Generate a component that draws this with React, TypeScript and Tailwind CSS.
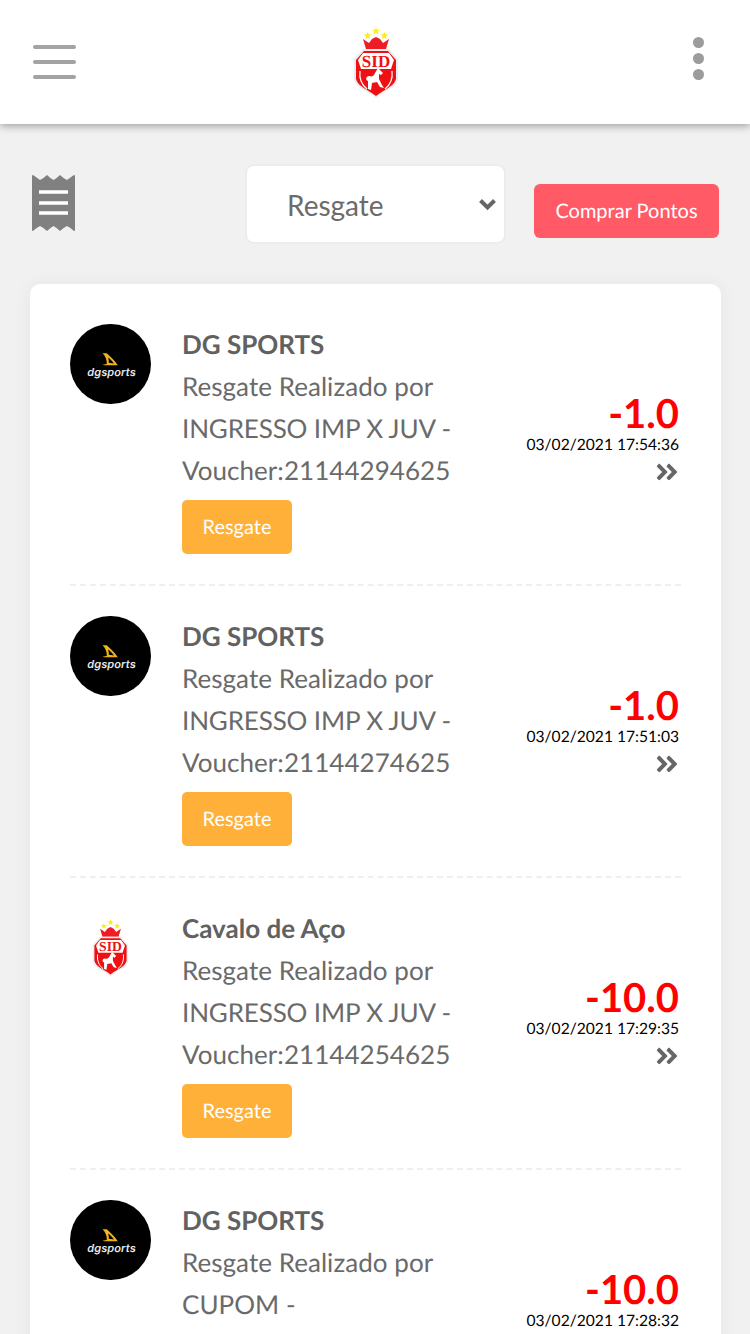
import React from "react";
import { FaAngleDoubleRight } from "react-icons/fa";

function Star({ cx, cy, r }: { cx: number; cy: number; r: number }) {
  const pts: string[] = [];
  for (let i = 0; i < 10; i++) {
    const a = (Math.PI / 5) * i - Math.PI / 2;
    const rad = i % 2 === 0 ? r : r * 0.42;
    pts.push(`${cx + rad * Math.cos(a)},${cy + rad * Math.sin(a)}`);
  }
  return <polygon points={pts.join(" ")} fill="#f7ee1f" />;
}

function SidLogo({ className }: { className: string }) {
  return (
    <svg viewBox="0 0 46 72" className={className}>
      <Star cx={23} cy={4.2} r={4.2} />
      <Star cx={14.7} cy={8.8} r={4.2} />
      <Star cx={31.3} cy={8.8} r={4.2} />
      <path d="M10 12 L16 16 L19 12 L23 10 L27 12 L30 16 L36 12 L33 22 H13 Z" fill="#ee1c25" />
      <path d="M10 22 H36 L45 32 V53 C42 62 31 64 23 71 C15 64 4 62 1 53 V32 Z" fill="#ececec" />
      <path d="M11 24 H35 L43 33 V52 C41 60 30 63 23 69 C16 63 5 60 3 52 V33 Z" fill="#ee1114" />
      <path d="M10 26 H36 L41 33 L38 42 H8 L5 33 Z" fill="#fff" />
      <text x="23" y="40" textAnchor="middle" fontFamily="Liberation Serif, serif" fontWeight="700" fontSize="17" fill="#ee1114">SID</text>
      <path d="M7 44 C6 52 9 58 14 62 M39 44 C40 52 37 58 32 62" fill="none" stroke="#fff" strokeWidth="1.2" />
      <path d="M25 41 L30 46 L28 48 L26 47 L26 52 C28 56 29 58 31 61 L27 60 L24 55 L19 56 L18 63 L15 62 L15 54 C12 53 13 49 16 49 C19 50 21 49 22 46 Z" fill="#fff" />
    </svg>
  );
}

function DgLogo() {
  return (
    <div className="w-[81px] h-[80px] shrink-0 rounded-full bg-black flex flex-col items-center justify-center pt-[3px]">
      <svg viewBox="0 0 48 40" className="w-[16px] h-[13px] -ml-[1px]">
        <path d="M1 1 L14 1 C26 12 38 22 48 38 L8 38 L0 36 L14 34 C15 22 10 10 1 1 Z M20 30 L36 32 C30 24 24 18 18 14 C20 20 21 25 20 30 Z" fill="#f2b418" fillRule="evenodd" />
      </svg>
      <span className="font-['Inter',sans-serif] italic font-semibold text-[11px] leading-[14px] tracking-[0.1px] text-[#e8e8e8] ml-[2px] -mt-[1px]">dgsports</span>
    </div>
  );
}

type Item = { logo: "dg" | "sid"; title: string; lines: string[]; value: string; date: string };

const items: Item[] = [
  { logo: "dg", title: "DG SPORTS", lines: ["Resgate Realizado por", "INGRESSO IMP X JUV -", "Voucher:21144294625"], value: "-1.0", date: "03/02/2021 17:54:36" },
  { logo: "dg", title: "DG SPORTS", lines: ["Resgate Realizado por", "INGRESSO IMP X JUV -", "Voucher:21144274625"], value: "-1.0", date: "03/02/2021 17:51:03" },
  { logo: "sid", title: "Cavalo de Aço", lines: ["Resgate Realizado por", "INGRESSO IMP X JUV -", "Voucher:21144254625"], value: "-10.0", date: "03/02/2021 17:29:35" },
  { logo: "dg", title: "DG SPORTS", lines: ["Resgate Realizado por", "CUPOM -", "Voucher:21144234625"], value: "-10.0", date: "03/02/2021 17:28:32" },
];

function Row({ item, last }: { item: Item; last: boolean }) {
  return (
    <div className={"flex pt-[30px] pb-[30px] " + (last ? "" : "border-b-2 border-dashed border-[#efefef]")}>
      <div className="w-[112px] shrink-0">
        {item.logo === "dg" ? (
          <DgLogo />
        ) : (
          <div className="w-[81px] h-[80px] flex items-center justify-center">
            <SidLogo className="w-[37px] h-[58px]" />
          </div>
        )}
      </div>
      <div className="w-[290px] shrink-0 text-[26px] leading-[42px] text-[#6a6a6a] -mt-[1px]">
        <div className="font-bold text-[#616161]">{item.title}</div>
        {item.lines.map((l) => (
          <div key={l} className={"whitespace-nowrap " + (l.startsWith("INGRESSO") ? "tracking-[-0.15px]" : "tracking-[0.05px]")}>{l}</div>
        ))}
        <div className="mt-[9px] w-[110px] h-[54px] rounded-[5px] bg-[#ffb039] text-white text-[20px] flex items-center justify-center">
          Resgate
        </div>
      </div>
      <div className="flex-1 flex flex-col items-end pt-[65px] mr-[2px]">
        <div className="text-[40px] leading-[48px] font-bold text-[#ff0000]">{item.value}</div>
        <div className="text-[15.6px] leading-[20px] text-black whitespace-nowrap -mt-[2px]">{item.date}</div>
        <FaAngleDoubleRight className="text-[#666666] w-[26px] h-[26px] mt-[4px] -mr-[1px]" />
      </div>
    </div>
  );
}

export default function App() {
  return (
    <div className="h-[1334px] overflow-hidden bg-[#f1f1f1] font-['Lato',sans-serif] [text-rendering:geometricPrecision]">
      <header className="h-[124px] bg-white shadow-[0_2px_8px_rgba(0,0,0,0.35)] flex items-center pl-[33px] pr-[46px] relative">
        <div className="flex flex-col gap-[11px] w-[43px]">
          <span className="h-[4px] rounded-full bg-[#a3a3a3]" />
          <span className="h-[4px] rounded-full bg-[#a3a3a3]" />
          <span className="h-[4px] rounded-full bg-[#a3a3a3]" />
        </div>
        <SidLogo className="w-[46px] h-[72px] ml-[277px] mt-[1px]" />
        <div className="flex flex-col gap-[5px] w-[11px] ml-auto -mt-[7px]">
          <span className="h-[11px] rounded-full bg-[#9c9c9c]" />
          <span className="h-[11px] rounded-full bg-[#9c9c9c]" />
          <span className="h-[11px] rounded-full bg-[#9c9c9c]" />
        </div>
      </header>

      <div className="flex items-center pl-[32px] h-[160px]">
        <svg viewBox="0 0 43 56" className="w-[43px] h-[56px] shrink-0 -mt-[3px]">
          <path d="M1 0 Q4 2 8 5 Q12 3 15 0 Q18 3 21.500 5 Q25 3 28 0 Q31 3 35 5 Q39 2 42 0 Q43 0 43 1 V55 Q43 56 42 56 Q39 53 35 51 Q31 53 28 56 Q25 53 21.500 51 Q18 53 15 56 Q12 53 8 51 Q4 53 1 56 Q0 56 0 55 V1 Q0 0 1 0 Z" fill="#808080" />
          <path d="M7 17 H36 M7 28 H36 M7 38 H36" stroke="#fff" strokeWidth="3.5" fill="none" />
        </svg>
        <div className="relative ml-[170px] w-[261px] h-[80px] shrink-0">
          <select className="appearance-none w-full h-full bg-white border-2 border-[#ececec] rounded-[9px] pl-[40px] pt-[2px] text-[28px] text-[#6b6b6b] outline-none">
            <option>Resgate</option>
          </select>
          <svg viewBox="0 0 19 13" className="absolute right-[9px] top-[34px] w-[19px] h-[13px]">
            <path d="M2.500 2.500 L9.500 9.500 L16.500 2.500" fill="none" stroke="#666666" strokeWidth="4" />
          </svg>
        </div>
        <div className="ml-[28px] mt-[14px] w-[185px] h-[54px] rounded-[6px] bg-[#ff5a65] text-white text-[20px] flex items-center justify-center">
          Comprar Pontos
        </div>
      </div>

      <div className="mx-[30px] w-[691px] bg-white rounded-[10px] px-[40px] pt-[10px] shadow-[0_0_20px_rgba(0,0,0,0.05)]">
        {items.map((it, i) => (
          <Row key={i} item={it} last={i === items.length - 1} />
        ))}
      </div>
    </div>
  );
}
